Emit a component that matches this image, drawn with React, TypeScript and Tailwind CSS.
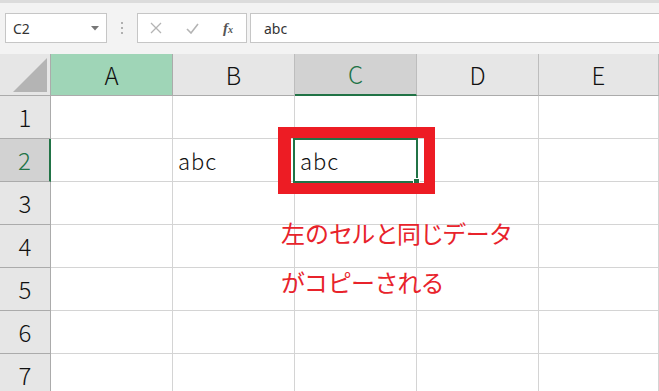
import React from 'react';

const cols = ['A', 'B', 'C', 'D', 'E'];
const rows = [1, 2, 3, 4, 5, 6, 7];

const jp = { fontFamily: '"Noto Sans CJK JP", "Noto Sans", sans-serif' };
const ui = { fontFamily: '"Noto Sans", "Liberation Sans", sans-serif' };

const FormulaBar = () => (
  <div className="h-[54px] bg-[#f3f3f3] border-t-[3px] border-[#dcdcdc] pt-[10px] flex items-start" style={ui}>
    {/* Name box */}
    <div className="ml-[5px] w-[102px] h-[30px] bg-white border border-[#c6c6c6] flex items-center justify-between pl-[7px] pr-[7px]">
      <span className="text-[14px] text-[#333]">C2</span>
      <svg width="8" height="5" viewBox="0 0 8 5">
        <path d="M0 0 L8 0 L4 4.5 Z" fill="#777" />
      </svg>
    </div>

    <div className="w-[30px] h-[30px] flex flex-col items-center justify-center gap-[3px]">
      <span className="w-[2px] h-[2px] bg-[#b0b0b0]" />
      <span className="w-[2px] h-[2px] bg-[#b0b0b0]" />
      <span className="w-[2px] h-[2px] bg-[#b0b0b0]" />
    </div>

    {/* Cancel / enter / fx */}
    <div className="w-[110px] h-[30px] bg-white border border-[#c6c6c6] grid grid-cols-3">
      <div className="flex items-center justify-center">
        <svg width="12" height="12" viewBox="0 0 12 12">
          <path d="M1 1 L11 11 M11 1 L1 11" stroke="#b4b4b4" strokeWidth="1.3" />
        </svg>
      </div>
      <div className="flex items-center justify-center">
        <svg width="13" height="11" viewBox="0 0 13 11">
          <path d="M1 6 L5 10 L12 1" stroke="#b4b4b4" strokeWidth="1.6" fill="none" />
        </svg>
      </div>
      <div className="flex items-center justify-center">
        <span className="italic font-bold text-[15px] text-[#555] leading-none" style={{ fontFamily: '"Liberation Serif", serif' }}>
          f<span className="text-[10px]">x</span>
        </span>
      </div>
    </div>

    {/* Formula input */}
    <div className="ml-[3px] flex-1 h-[30px] bg-white border border-r-0 border-[#c6c6c6] flex items-center pl-[13px]">
      <span className="text-[14px] text-[#333]">abc</span>
    </div>
  </div>
);

const Sheet = () => (
  <div className="grid grid-cols-[51px_122px_122px_122px_122px_1fr] grid-rows-[42px_repeat(7,43px)]" style={jp}>
    {/* Corner */}
    <div className="bg-[#e6e6e6] border-r border-b border-[#ababab] relative">
      <svg className="absolute left-[13px] top-[4px]" width="34" height="34" viewBox="0 0 34 34">
        <path d="M34 0 L34 34 L0 34 Z" fill="#b4b4b4" />
      </svg>
    </div>

    {cols.map((c) => (
      <div
        key={c}
        className={
          c === 'A'
            ? 'bg-[#9fd5b7] border-r border-b border-[#ababab] flex items-center justify-center text-[24px] font-light text-[#111]'
            : c === 'C'
            ? 'bg-[#d2d2d2] border-r border-[#bdbdbd] border-b-2 border-b-[#217346] flex items-center justify-center text-[24px] font-light text-[#217346]'
            : 'bg-[#e6e6e6] border-r border-[#bdbdbd] border-b border-b-[#ababab] flex items-center justify-center text-[24px] font-light text-[#111]'
        }
      >
        {c}
      </div>
    ))}

    {rows.map((r) => (
      <React.Fragment key={r}>
        <div
          className={
            r === 2
              ? 'bg-[#d2d2d2] border-r-2 border-r-[#217346] border-b border-b-[#ababab] flex items-center justify-center text-[24px] font-light text-[#217346]'
              : 'bg-[#e6e6e6] border-r border-b border-[#ababab] flex items-center justify-center text-[24px] font-light text-[#111]'
          }
        >
          {r}
        </div>
        {cols.map((c) => (
          <div key={c} className="bg-white border-r border-b border-[#d4d4d4] flex items-center pl-[5px] text-[22px] font-light tracking-[1px] text-[#111]">
            {r === 2 && (c === 'B' || c === 'C') ? 'abc' : ''}
          </div>
        ))}
      </React.Fragment>
    ))}
  </div>
);

export default function App() {
  return (
    <div className="relative w-[659px] h-[391px] overflow-hidden bg-white">
      <FormulaBar />
      <Sheet />

      {/* Active cell selection */}
      <div className="absolute left-[293px] top-[138px] w-[125px] h-[45px] border-2 border-[#217346]" />
      <div className="absolute left-[413px] top-[178px] w-[7px] h-[7px] bg-[#217346] border border-white" />

      {/* Annotation */}
      <div className="absolute left-[278px] top-[127px] w-[157px] h-[67px] border-t-[11px] border-l-[13px] border-r-[11px] border-b-[11px] border-[#ed1c24]" />
      <div
        className="absolute left-[281px] top-[208px] text-[24px] leading-[49px] tracking-[0.5px] text-[#e8232b]"
        style={{ ...jp, fontFeatureSettings: '"palt"' }}
      >
        <div>左のセルと同じデータ</div>
        <div>がコピーされる</div>
      </div>
    </div>
  );
}
